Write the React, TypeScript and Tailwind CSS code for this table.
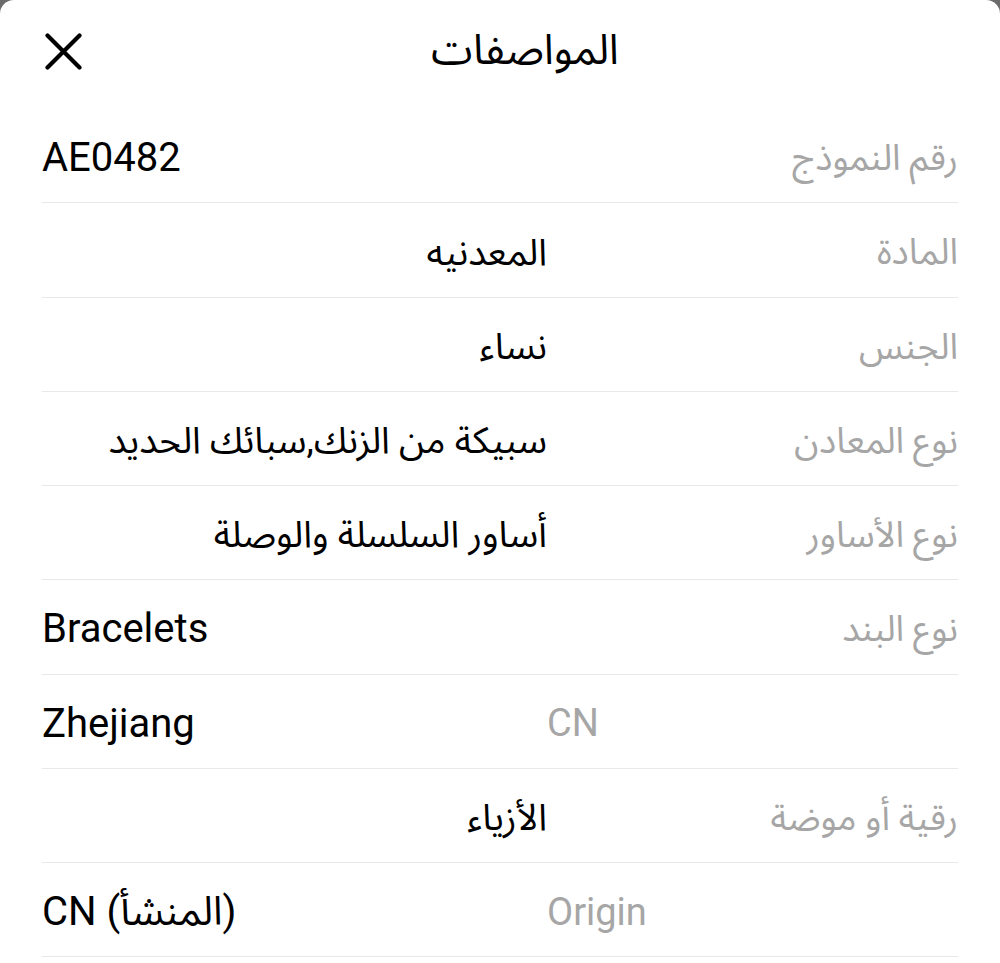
const rows: { label: string; value: string }[] = [
  { label: 'رقم النموذج', value: 'AE0482' },
  { label: 'المادة', value: 'المعدنيه' },
  { label: 'الجنس', value: 'نساء' },
  { label: 'نوع المعادن', value: 'سبيكة من الزنك,سبائك الحديد' },
  { label: 'نوع الأساور', value: 'أساور السلسلة والوصلة' },
  { label: 'نوع البند', value: 'Bracelets' },
  { label: 'CN', value: 'Zhejiang' },
  { label: 'رقية أو موضة', value: 'الأزياء' },
  { label: 'Origin', value: 'CN (المنشأ)' },
];

const latin = (s: string) => /^[A-Za-z0-9]/.test(s);

export default function App() {
  return (
    <div className="w-[1000px] h-[963px] bg-[#6b6b6b] overflow-hidden font-['Roboto','Noto_Sans_Arabic','DejaVu_Sans',sans-serif]">
      <div className="h-full bg-white rounded-t-[14px]" dir="rtl">
        {/* header */}
        <div className="relative h-[109px] flex items-center justify-center pb-[10px] pl-[50px]">
          <h1 className="text-[42px] leading-none text-black">المواصفات</h1>
          <button className="absolute left-[45px] top-[33px] w-[37px] h-[37px] flex items-center justify-center">
            <svg width="37" height="37" viewBox="0 0 37 37" fill="none">
              <path d="M2.5 2.5L34.5 34.5M34.5 2.5L2.5 34.5" stroke="#000" strokeWidth="4.2" strokeLinecap="round" />
            </svg>
          </button>
        </div>

        <div className="px-[42px]">
          {rows.map((r) => (
            <div key={r.label} className="flex items-center h-[94.25px] pt-[5px] border-b border-[#e8e8e8]">
              <div
                dir="auto"
                className={
                  latin(r.label)
                    ? 'w-[411px] shrink-0 text-start text-[38px] text-[#a6a6a6] whitespace-nowrap'
                    : 'w-[411px] shrink-0 text-start text-[36px] text-[#a6a6a6] whitespace-nowrap'
                }
              >
                {r.label}
              </div>
              <div
                dir="auto"
                className={
                  latin(r.value)
                    ? 'flex-1 text-start text-[40px] text-black whitespace-nowrap'
                    : 'flex-1 text-start text-[37px] text-black whitespace-nowrap'
                }
              >
                {r.value}
              </div>
            </div>
          ))}
        </div>
      </div>
    </div>
  );
}
